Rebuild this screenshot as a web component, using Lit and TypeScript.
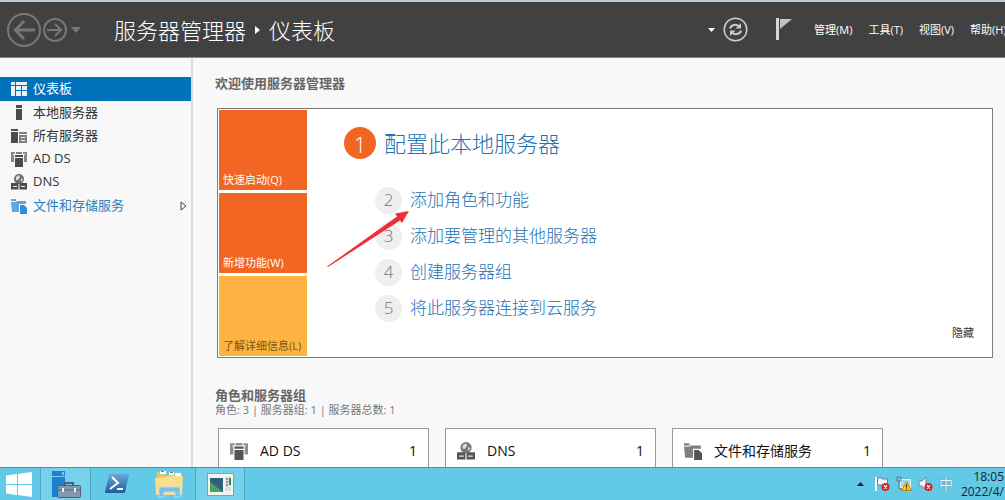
import { LitElement, html, css, svg } from "lit";
import { customElement, property } from "lit/decorators.js";
import { classMap } from "lit/directives/class-map.js";

const glyphs: Record<string, unknown> = {
  dashboard: svg`<path d="M0 1h4v3H0zM5 1h11v3H5zM0 5h4v10H0zM5 5h5v4H5zM11 5h5v4h-5zM5 10h5v5H5zM11 10h5v5h-5z" opacity=".9"/>`,
  server: svg`<path d="M5 0h6v3H5zM5 4h6v11H5z"/>`,
  servers: svg`<path d="M0 1h7v2H0zM0 4h7v11H0z"/><path d="M8 4h8v2H8zM8 7h8v8H8z" opacity=".7"/><path d="M10 9.500h4M10 12.500h4" stroke="#f8f8f8" stroke-width="1"/>`,
  adds: svg`<path d="M0 1h4v2H2v1h1v7H0zM16 1h-4v2h2v1h-1v7h3z" opacity=".65"/><path d="M5 1h6v2H5z" opacity=".7"/><path d="M4 4h8v2H4zM4 7h8v9H4z"/>`,
  dns: svg`<circle cx="8" cy="5" r="5" opacity=".8"/><path d="M5 3l3-2 1 2-2 3H5zM10 4l2 2-2 2z" fill="#ddd"/><path d="M0 9h7.500v6.500H0zM8.500 9H16v6.500H8.500z"/><path d="M2 12.500h4M10 12.500h4" stroke="#eee" stroke-width="1"/>`,
  files: svg`<path d="M0 1h5v2H0zM0 4h5l1-1h9v3H8v8H1z" opacity=".75"/><path d="M9 7h4l3 3v6H9z"/>`,
};

@customElement("sm-icon")
export class SmIcon extends LitElement {
  @property() name = "server";
  static styles = css`
    :host { display: block; flex: none; width: 16px; height: 16px; }
    svg { display: block; width: 100%; height: 100%; fill: currentColor; }
  `;
  render() {
    return html`<svg viewBox="0 0 16 16" aria-hidden="true">${glyphs[this.name]}</svg>`;
  }
}

const nav = [
  { icon: "dashboard", label: "仪表板", selected: true },
  { icon: "server", label: "本地服务器" },
  { icon: "servers", label: "所有服务器" },
  { icon: "adds", label: "AD DS" },
  { icon: "dns", label: "DNS" },
  { icon: "files", label: "文件和存储服务", expandable: true },
];
const menus = ["管理(M)", "工具(T)", "视图(V)", "帮助(H)"];
const tiles = [
  { label: "快速启动(Q)" },
  { label: "新增功能(W)" },
  { label: "了解详细信息(L)", light: true },
];
const steps = ["添加角色和功能", "添加要管理的其他服务器", "创建服务器组", "将此服务器连接到云服务"];
const roles = [
  { icon: "adds", label: "AD DS", count: 1 },
  { icon: "dns", label: "DNS", count: 1 },
  { icon: "files", label: "文件和存储服务", count: 1 },
];

@customElement("app-root")
export class AppRoot extends LitElement {
  static styles = css`
    :host {
      display: flex;
      flex-direction: column;
      height: 100vh;
      overflow: hidden;
      background: #f8f8f8;
      color: #333;
      font: 13px/20px "Open Sans", "Noto Sans CJK SC", sans-serif;
    }
    * { box-sizing: border-box; }
    button {
      margin: 0; padding: 0; border: 0; background: none;
      color: inherit; font: inherit; text-align: left; white-space: nowrap; cursor: pointer;
    }
    a { color: inherit; text-decoration: none; white-space: nowrap; }
    svg { display: block; flex: none; }
    ul, ol { list-style: none; margin: 0; padding: 0; }
    h1, h2, p { margin: 0; }

    .header {
      flex: none; display: flex; align-items: center; height: 58px; overflow: hidden;
      background: #414141; color: #fff;
      border-top: 2px solid #b7cad5; border-bottom: 1px solid #8a8a8a;
    }
    .history { display: flex; align-items: center; gap: 2px; width: 114px; padding-left: 7px; }
    .history .drop { margin-left: 2px; }
    .crumbs {
      display: flex; align-items: center; gap: 9px; flex: 1;
      font-size: 22px; line-height: 32px; font-weight: 300; white-space: nowrap;
    }
    .crumbs h1 { font: inherit; }
    .tools { display: flex; align-items: center; flex: none; width: 297px; }
    .refresh { margin-left: 8px; }
    .bar { width: 2px; height: 16px; margin-left: 10px; background: #b0b0b0; }
    .flag { margin-left: 18px; }
    .menus { display: flex; gap: 16px; margin-left: 22px; font-size: 11px; }

    .body { flex: 1; min-height: 0; display: flex; overflow: hidden; }
    .nav { flex: none; width: 193px; padding-top: 19px; border-right: 2px solid #dedede; }
    .nav button {
      display: flex; align-items: center; gap: 6px; width: 100%; height: 23px;
      padding: 0 4px 0 11px; color: #333;
    }
    .nav span { padding-bottom: 2px; }
    .nav sm-icon { color: #4c4c4c; }
    .nav .selected { height: 24px; background: #0072bb; color: #fff; }
    .nav .selected sm-icon { color: #fff; }
    .nav .expandable { height: 25px; color: #2b7fbd; }
    .nav .expandable sm-icon { color: #2e8fd8; }
    .nav .chevron { margin-left: auto; }

    .content { flex: 1; min-width: 0; padding: 17px 12px 0 22px; overflow: hidden; }
    .heading { font-size: 13px; line-height: 16px; font-weight: 700; color: #666; }
    .welcome {
      position: relative; display: flex; margin: 17px 0 0 2px;
      padding: 1px; border: 1px solid #7c7c7c; background: #fff;
    }
    .tiles { display: grid; grid-auto-rows: 80px; gap: 3px; width: 88px; flex: none; }
    .tile {
      display: flex; align-items: flex-end; padding: 0 0 1px 4px;
      background: #f36523; color: #fff; font-size: 11px; line-height: 18px;
    }
    .tile.light { background: #ffb343; color: #7b5316; }
    .quick { flex: 1; display: flex; flex-direction: column; padding: 16px 17px 15px 37px; }
    .lead { display: flex; align-items: center; gap: 8px; color: #2272b4; font-size: 22px; line-height: 34px; font-weight: 300; }
    .steps { display: grid; gap: 8px; margin: 26px 0 0 31px; }
    .step { display: flex; align-items: center; gap: 8px; height: 28px; color: #2272b4; font-size: 17px; font-weight: 300; }
    .num {
      display: grid; place-items: center; width: 27px; height: 27px; border-radius: 50%;
      background: #efefef; color: #777;
    }
    .num.first { width: 32px; height: 32px; background: #f36523; color: #fff; font-size: 22px; }
    .hide { align-self: flex-end; margin-top: auto; font-size: 11px; line-height: 16px; color: #333; }
    .pointer { position: absolute; left: 109px; top: 101px; pointer-events: none; }

    .groups { margin-top: 29px; }
    .summary { font-size: 11px; line-height: 14px; color: #777; }
    .cards { display: grid; grid-template-columns: repeat(auto-fill, 211px); gap: 16px; margin: 11px 0 0 3px; }
    .card {
      display: flex; align-items: flex-start; gap: 12px; height: 120px; padding: 12px 11px 0;
      border: 1px solid #999; background: #fff; color: #111; font-size: 14px;
    }
    .card sm-icon { width: 18px; height: 18px; color: #555; margin-top: 1px; }
    .count { margin-left: auto; }

    .taskbar {
      flex: none; display: flex; height: 33px; overflow: hidden;
      background: #62c9e7; border-top: 1px solid #4593ad; color: #10252d;
    }
    .task { display: grid; place-items: center; width: 52px; height: 32px; flex: none; }
    .task.start { width: 41px; padding-right: 3px; border-right: 1px solid #4ba6c3; }
    .task.open { width: 50px; background: #78d1ea; border-right: 1px solid #4ba6c3; }
    .task.window { border-left: 1px solid #4ba6c3; }
    .tray { display: flex; align-items: center; gap: 6px; margin-left: auto; }
    .tray .up { margin-right: 5px; }
    .ime { font-size: 14px; color: #eef6ff; text-shadow: 0 0 1px #446; }
    .clock { font-size: 12px; line-height: 15px; text-align: right; padding: 0 1px 0 2px; }
  `;

  render() {
    return html`
      <header class="header">
        <div class="history">
          <button aria-label="后退">
            <svg width="34" height="34" viewBox="0 0 34 34" fill="none" stroke="#777" stroke-width="2">
              <circle cx="17" cy="17" r="16"/><path d="M28 17H9" stroke-width="3"/><path d="M17 8l-8.500 9 8.500 9" stroke-width="3"/>
            </svg>
          </button>
          <button aria-label="前进">
            <svg width="24" height="24" viewBox="0 0 24 24" fill="none" stroke="#777" stroke-width="2">
              <circle cx="12" cy="12" r="11"/><path d="M4 12h13"/><path d="M12 6l6 6-6 6"/>
            </svg>
          </button>
          <button class="drop" aria-label="历史记录"><svg width="10" height="6" viewBox="0 0 10 6"><path d="M0 0h10L5 6z" fill="#777"/></svg></button>
        </div>
        <div class="crumbs">
          <span>服务器管理器</span>
          <svg width="5" height="8" viewBox="0 0 5 8"><path d="M0 0l5 4-5 4z" fill="#fff"/></svg>
          <h1>仪表板</h1>
        </div>
        <div class="tools">
          <button aria-label="更多"><svg width="7" height="4" viewBox="0 0 7 4"><path d="M0 0h7L3.500 4z" fill="#fff"/></svg></button>
          <button class="refresh" aria-label="刷新">
            <svg width="25" height="25" viewBox="0 0 25 25" fill="none" stroke="#ccc">
              <circle cx="12.500" cy="12.500" r="11.300" stroke-width="1.500"/>
              <path d="M7 11.500c1-4 7-5 9.500-1.500M18 13.500c-1 4-7 5-9.500 1.500" stroke-width="2"/>
              <path d="M18 6v5.500h-5.500zM7 19v-5.500h5.500z" fill="#ccc" stroke="none"/>
            </svg>
          </button>
          <span class="bar"></span>
          <button class="flag" aria-label="通知">
            <svg width="16" height="23" viewBox="0 0 16 23"><path d="M0 0h3v22H0z" fill="#d8d8d8"/><path d="M4 1h12L4 11z" fill="#c4c4c4"/></svg>
          </button>
          <nav class="menus">${menus.map((m) => html`<button>${m}</button>`)}</nav>
        </div>
      </header>

      <div class="body">
        <nav class="nav">
          <ul>
            ${nav.map((n) => html`<li>
              <button class=${classMap({ selected: !!n.selected, expandable: !!n.expandable })}>
                <sm-icon name=${n.icon}></sm-icon><span>${n.label}</span>
                ${n.expandable ? html`<svg class="chevron" width="7" height="10" viewBox="0 0 7 10"><path d="M1 1l5 4-5 4z" fill="none" stroke="#444"/></svg>` : ""}
              </button>
            </li>`)}
          </ul>
        </nav>

        <main class="content">
          <h2 class="heading">欢迎使用服务器管理器</h2>
          <section class="welcome">
            <div class="tiles">
              ${tiles.map((t) => html`<button class=${classMap({ tile: true, light: !!t.light })}>${t.label}</button>`)}
            </div>
            <div class="quick">
              <a class="lead" href="#"><span class="num first">1</span>配置此本地服务器</a>
              <ol class="steps">
                ${steps.map((s, i) => html`<li><a class="step" href="#"><span class="num">${i + 2}</span>${s}</a></li>`)}
              </ol>
              <button class="hide">隐藏</button>
            </div>
            <svg class="pointer" width="84" height="58" viewBox="0 0 84 58">
              <path d="M0 56.500L70 6.500 68 3.500 82 1 75 13 73 10.500 1 57z" fill="#ee2f35"/>
            </svg>
          </section>

          <section class="groups">
            <h2 class="heading">角色和服务器组</h2>
            <p class="summary">角色: 3 | 服务器组: 1 | 服务器总数: 1</p>
            <div class="cards">
              ${roles.map((r) => html`<button class="card"><sm-icon name=${r.icon}></sm-icon><span>${r.label}</span><span class="count">${r.count}</span></button>`)}
            </div>
          </section>
        </main>
      </div>

      <footer class="taskbar">
        <button class="task start" aria-label="开始">
          <svg width="26" height="25" viewBox="0 0 26 25" fill="#fff"><path d="M0 3.500l11-1.500v10H0zM12 2l14-2v12H12zM0 13h11v10L0 21.500zM12 13h14v12l-14-2z"/></svg>
        </button>
        <button class="task open" aria-label="服务器管理器">
          <svg width="30" height="28" viewBox="0 0 30 28">
            <path d="M1 1h13v5H1zM1 7h13v20H1z" fill="#1c80d4"/><path d="M11 2h2v3h-2z" fill="#7cc2f2"/>
            <path d="M14 16v-3h8v3" fill="none" stroke="#4d5e6e" stroke-width="2"/>
            <rect x="6.500" y="15.500" width="23" height="12" rx="1" fill="#8299ae" stroke="#4d6073"/>
            <path d="M7 20h22" stroke="#516679"/><path d="M11 18h2v4h-2zM23 18h2v4h-2z" fill="#eef"/>
          </svg>
        </button>
        <button class="task" aria-label="PowerShell">
          <svg width="24" height="20" viewBox="0 0 24 20">
            <defs><linearGradient id="ps" x2="0" y2="1"><stop stop-color="#6ba9da"/><stop offset="1" stop-color="#1c5c9e"/></linearGradient></defs>
            <path d="M5 0h18q1 0 1 1l-4 17q0 1-1 1H1q-1 0-1-1L4 1q0-1 1-1z" fill="url(#ps)"/>
            <path d="M7 3l6 6-8 6M12 15h6" fill="none" stroke="#fff" stroke-width="2"/>
          </svg>
        </button>
        <button class="task" aria-label="文件资源管理器">
          <svg width="29" height="28" viewBox="0 0 29 28">
            <path d="M2 2h8l1 3h16v18H1z" fill="#e6c260"/><path d="M5 1h6v3H5zM14 2h5v3h-5zM20 3h6v3h-6z" fill="#fff"/>
            <path d="M6 1h3v1H6z" fill="#4b9b5b"/><path d="M15 2h3v1h-3z" fill="#c55"/>
            <path d="M0 8l12-1 2-1h14l-1 19H1z" fill="#f8de8d"/>
            <path d="M4 27v-8q0-2 2-2h17q2 0 2 2v8h-5v-5H9v5z" fill="#79bfe4" stroke="#b5dff2"/>
          </svg>
        </button>
        <button class="task open window" aria-label="控制台">
          <svg width="27" height="23" viewBox="0 0 27 23">
            <rect x=".5" y=".5" width="26" height="22" fill="#f4f4f4" stroke="#999"/>
            <rect x="3" y="5" width="13" height="14" fill="#315f7c"/><path d="M3 19V9l13 10z" fill="#49a35b"/>
            <path d="M18 4h6v14h-6z" fill="#ddd"/><path d="M22 5h2v7h-2z" fill="#2e8a4b"/><path d="M19 6h2M19 9h2M19 12h2" stroke="#456"/>
          </svg>
        </button>
        <div class="tray">
          <svg class="up" width="7" height="4" viewBox="0 0 7 4"><path d="M0 4h7L3.500 0z" fill="#123"/></svg>
          <svg width="15" height="16" viewBox="0 0 15 16"><path d="M1 1v14" stroke="#fff" stroke-width="2"/><path d="M2.500 2h4l1 1h5v7h-4l-1-1h-5z" fill="#f6f6f6" stroke="#68838f"/><circle cx="10.500" cy="11" r="4" fill="#d8202c"/><path d="M9 9.500l3 3M12 9.500l-3 3" stroke="#fff" stroke-width="1.300"/></svg>
          <svg width="16" height="16" viewBox="0 0 16 16"><path d="M4.500 3.500h10v8h-10z" fill="#9ddaf0" stroke="#f4f4f4"/><path d="M1 1h4v4H1zM3 5v8h4" fill="none" stroke="#667985"/><path d="M10.500 5.500l5 9h-10z" fill="#f9c51f" stroke="#b8860b"/><path d="M10.500 8.500v3M10.500 12.500v1" stroke="#222"/></svg>
          <svg width="15" height="16" viewBox="0 0 15 16"><path d="M1 5h3l4-4v13l-4-4H1z" fill="#f6f6f6" stroke="#6f8894"/><circle cx="10.500" cy="11" r="4" fill="#d8202c"/><path d="M9 9.500l3 3M12 9.500l-3 3" stroke="#fff" stroke-width="1.300"/></svg>
          <button class="ime" aria-label="输入法">中</button>
          <div class="clock"><div>18:05</div><div>2022/4/</div></div>
        </div>
      </footer>
    `;
  }
}
